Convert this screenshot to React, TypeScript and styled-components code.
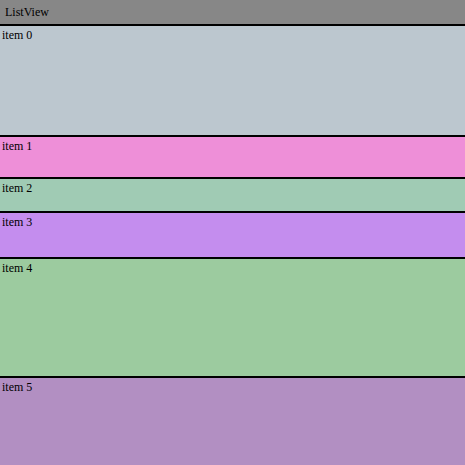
import styled, { createGlobalStyle } from "styled-components";

const GlobalStyle = createGlobalStyle`
  html, body {
    margin: 0;
    padding: 0;
    height: 100%;
    overflow: hidden;
  }
  #root {
    height: 100%;
  }
`;

const Container = styled.main`
  width: 465px;
  height: 465px;

  display: flex;
  flex-direction: column;

  overflow: hidden;
  font-family: "Liberation Serif", "Times New Roman", serif;
  font-size: 12px;
  color: #000;
`;
const Header = styled.header`
  height: 24px;
  flex-shrink: 0;

  display: flex;
  align-items: center;

  padding-left: 5px;
  border-bottom: 2px solid #000;

  background-color: #878787;
`;
const List = styled.section`
  display: flex;
  flex-direction: column;
  flex-grow: 1;
`;
const Item = styled.div<{ $bg: string; $h: number; $first?: boolean }>`
  height: ${(p) => p.$h}px;
  flex-shrink: 0;

  padding: 2px 0 0 2px;
  box-sizing: border-box;
  border-top: ${(p) => (p.$first ? "none" : "2px solid #000")};

  background-color: ${(p) => p.$bg};
  line-height: 14px;
`;

const items = [
  { bg: "#bcc7cf", h: 109 },
  { bg: "#ee8fd8", h: 42 },
  { bg: "#a0cbb4", h: 34 },
  { bg: "#c48dee", h: 46 },
  { bg: "#9ccb9f", h: 119 },
  { bg: "#b28fc2", h: 120 },
];

const App = () => {
  return (
    <Container>
      <GlobalStyle />
      <Header>ListView</Header>
      <List>
        {items.map((item, i) => (
          <Item key={i} $bg={item.bg} $h={item.h} $first={i === 0}>
            item {i}
          </Item>
        ))}
      </List>
    </Container>
  );
};

export default App;
